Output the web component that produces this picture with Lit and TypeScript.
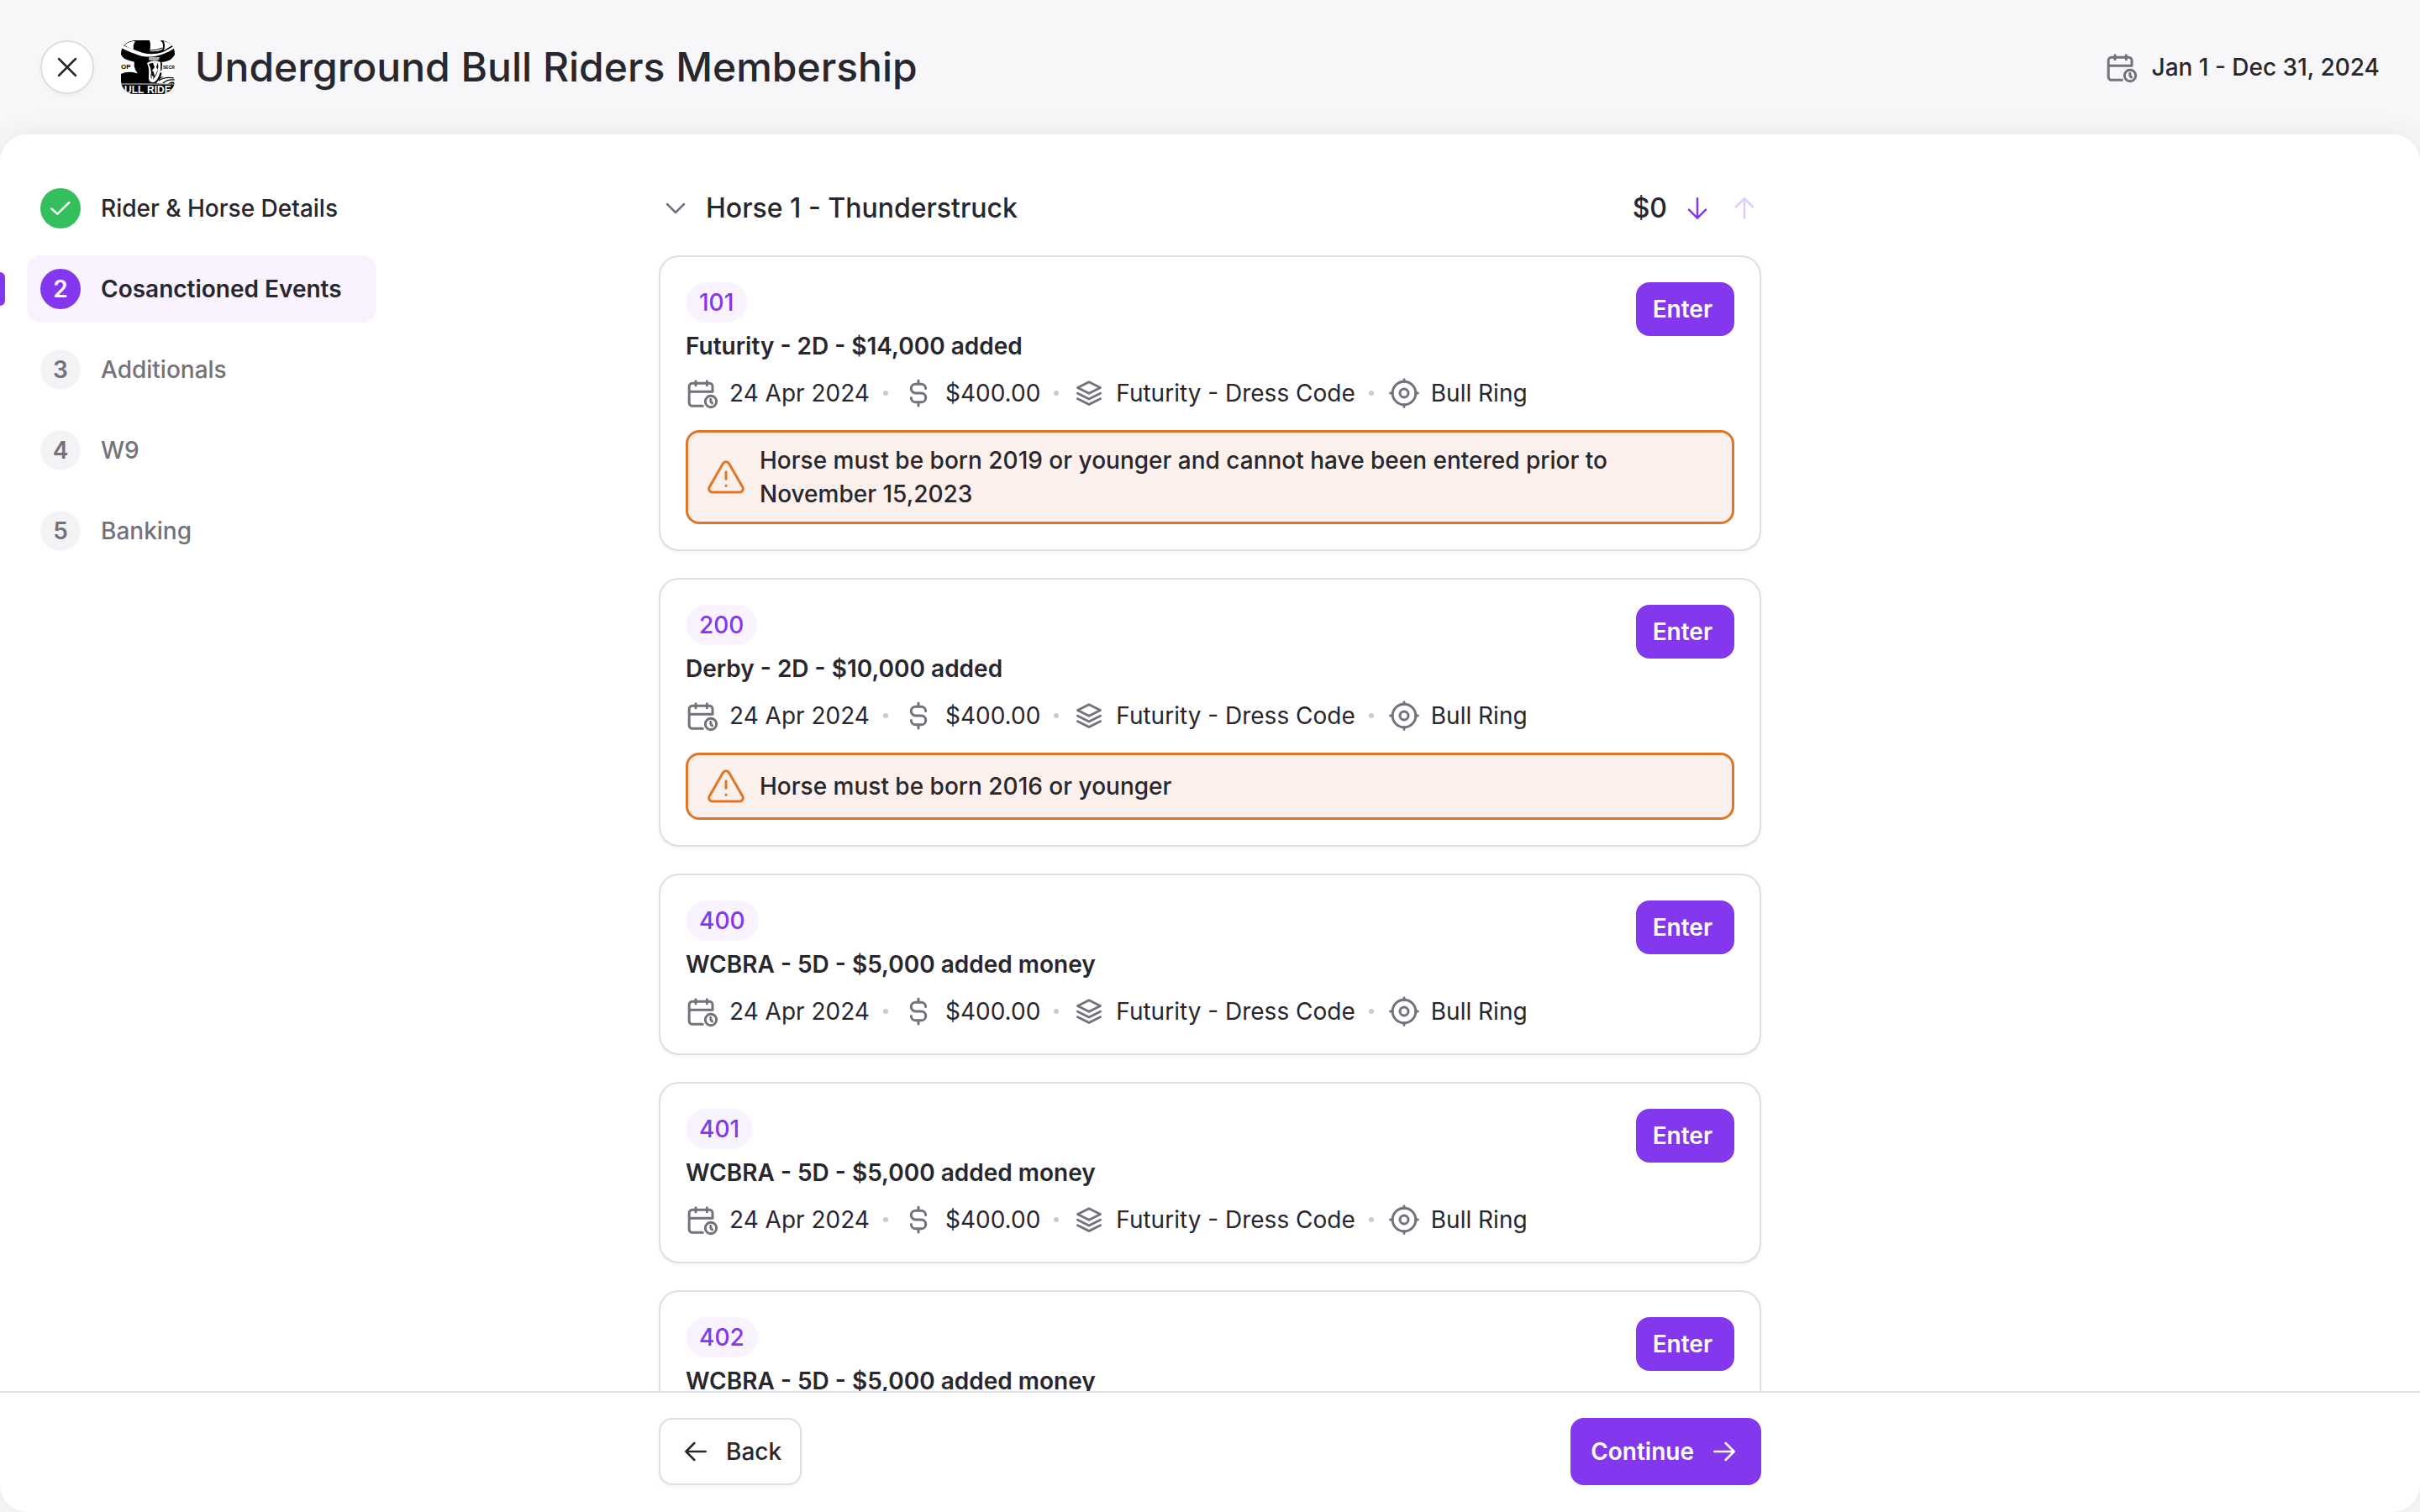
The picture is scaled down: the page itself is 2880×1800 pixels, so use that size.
import { LitElement, html, css, svg, nothing } from "lit";
import type { TemplateResult, SVGTemplateResult } from "lit";
import { customElement, property } from "lit/decorators.js";
import { classMap } from "lit/directives/class-map.js";

interface Step {
  label: string;
  state: "done" | "current" | "todo";
}

interface EventEntry {
  code: string;
  title: string;
  date: string;
  fee: string;
  category: string;
  venue: string;
  warning?: string;
}

const STEPS: Step[] = [
  { label: "Rider & Horse Details", state: "done" },
  { label: "Cosanctioned Events", state: "current" },
  { label: "Additionals", state: "todo" },
  { label: "W9", state: "todo" },
  { label: "Banking", state: "todo" },
];

const common = {
  date: "24 Apr 2024",
  fee: "$400.00",
  category: "Futurity - Dress Code",
  venue: "Bull Ring",
};

const EVENTS: EventEntry[] = [
  {
    ...common,
    code: "101",
    title: "Futurity - 2D - $14,000 added",
    warning:
      "Horse must be born 2019 or younger and cannot have been entered prior to November 15,2023",
  },
  {
    ...common,
    code: "200",
    title: "Derby - 2D - $10,000 added",
    warning: "Horse must be born 2016 or younger",
  },
  { ...common, code: "400", title: "WCBRA - 5D - $5,000 added money" },
  { ...common, code: "401", title: "WCBRA - 5D - $5,000 added money" },
  { ...common, code: "402", title: "WCBRA - 5D - $5,000 added money" },
];

const ICONS: Record<string, SVGTemplateResult> = {
  close: svg`<path d="M6 6l12 12M18 6 6 18"/>`,
  check: svg`<path d="M5.6 12.3 9.8 16 18.2 7.8"/>`,
  chevron: svg`<path d="M6 9l6 6 6-6"/>`,
  left: svg`<path d="M19 12H5m6-6-6 6 6 6"/>`,
  right: svg`<path d="M5 12h14m-6-6 6 6-6 6"/>`,
  down: svg`<path d="M12 5v14m6-6-6 6-6-6"/>`,
  up: svg`<path d="M12 19V5M6 11l6-6 6 6"/>`,
  calendar: svg`<g stroke-width="1.8"><path d="M7.2 3.4v3M15.2 3.4v3M2.5 11h16.7M12.2 21.2H4.7a2.2 2.2 0 0 1-2.2-2.2V7.1A2.2 2.2 0 0 1 4.7 4.9H17a2.2 2.2 0 0 1 2.2 2.2V11"/><circle cx="18" cy="18" r="4"/><path d="M17.9 16.4v1.7l1 1"/></g>`,
  dollar: svg`<path stroke-width="1.8" d="M12 3v2.5M12 18.5V21M17.2 8.75A3.25 3.25 0 0 0 14 5.5h-4a3.25 3.25 0 0 0 0 6.5h4a3.25 3.25 0 0 1 0 6.5h-4a3.25 3.25 0 0 1-3.2-3.25"/>`,
  layers: svg`<g stroke-width="1.7"><path d="M12 4 3.9 8.1l8.1 4.1 8.1-4.1z"/><path d="M3.9 12.1 12 16.2l8.1-4.1M3.9 16.1 12 20.1l8.1-4"/></g>`,
  target: svg`<g stroke-width="1.8"><circle cx="12" cy="12" r="8.3"/><circle cx="12" cy="12" r="3"/><path d="M12 2.2v1.5M12 20.3v1.5M2.2 12h1.5M20.3 12h1.5"/></g>`,
  warning: svg`<path d="m21.9 18-8.2-14.2a2 2 0 0 0-3.4 0L2.1 18a2 2 0 0 0 1.7 3h16.4a2 2 0 0 0 1.7-3z"/><path d="M12 8.9v4.2M12 17v.1"/>`,
};

@customElement("ui-icon")
class UiIcon extends LitElement {
  @property() name = "";

  static styles = css`
    :host {
      display: block;
      flex: none;
      width: 40px;
      height: 40px;
    }
    .glyph {
      display: block;
      width: 100%;
      height: 100%;
      fill: none;
      stroke: currentColor;
      stroke-width: 1.5;
      stroke-linecap: round;
      stroke-linejoin: round;
    }
  `;

  render() {
    return html`<svg class="glyph" viewBox="0 0 24 24" aria-hidden="true">
      ${ICONS[this.name]}
    </svg>`;
  }
}

@customElement("club-logo")
class ClubLogo extends LitElement {
  static styles = css`
    :host {
      display: block;
      flex: none;
      width: 64px;
      height: 64px;
      border-radius: 16px;
      overflow: hidden;
    }
    .art {
      display: block;
      width: 100%;
      height: 100%;
    }
    .label {
      font-family: "Liberation Sans", Arial, sans-serif;
      font-weight: 700;
    }
  `;

  render() {
    return html`<svg class="art" viewBox="0 0 64 64" role="img" aria-label="Bull Riders">
      <rect width="64" height="64" fill="#fff" />
      <path d="M0 9C8 13 16 16 22 18c8 2.500 18 2 26-1 6-2 12-5 16-8v8c-3 6-8 8-15 9H17C9 24 3 23 0 17z" fill="#000" />
      <path d="M2 6Q8 1 16 0h34q8 2 13 7L50 14q-12 4-24 1Q12 10 2 6z" fill="#000" />
      <path d="M4 6q5-5 13-5-3 4-2 10Q9 9 4 6z" fill="#fff" />
      <path d="M34 0h13q5 5 2 11-6 3-15 2 2-7 0-13z" fill="#fff" />
      <path d="M51 1q6 1 10 5l-10 6q2-5 0-11z" fill="#fff" />
      <path d="M34 12q9 0 15-3" fill="none" stroke="#000" stroke-width="1" />
      <path d="M1 7.500Q12 15 26 17.500q22 3 37-10" fill="none" stroke="#fff" stroke-width="1.400" />
      <path d="M17 20h29l3 8-1 14-8 10H22q-3-5-2-12-7-9-3-20z" fill="#000" />
      <path d="M33 20h13l-1 3.500q-6 1-12 0z" fill="#aaa" />
      <path d="M0 40q6-3 14-2l8 2 12 12 12-8q8-3 18 7v2H0z" fill="#000" />
      <path d="M31 27q8-5 16-1 1 9-2 17-4 8-8 7-5-1-4-8 1-8-2-15z" fill="#fff" />
      <path d="M33 28q6-2 11-1 1 8-2 14-3 6-5 5-3-2-1-7 0-6-3-11z" fill="#000" />
      <path d="M38 27l6-1-2 6 2 3-4 8-1-5-2-2 3-4z" fill="#fff" />
      <path d="M36 41l3 3-2 3z" fill="#fff" />
      <path d="M46 39q8-3 18 3v-6q-9-2-17 0z" fill="#fff" />
      <path d="M42 51q6-10 17-9l5 2v5q-5 0-9 3z" fill="#fff" />
      <path d="M45 48q7-5 18-3M50 51q5-5 14-4" fill="none" stroke="#000" stroke-width="1.200" />
      <path d="M0 52h64" stroke="#ddd" stroke-width="1.200" />
      <rect y="53" width="64" height="11" fill="#000" />
      <text class="label" x="0" y="34" font-size="8">OP</text>
      <text class="label" x="50" y="34" font-size="5">SECR</text>
      <text class="label" x="4" y="63" font-size="12" fill="#fff">ULL</text>
      <text class="label" x="31" y="63" font-size="12" fill="#fff">RIDE</text>
    </svg>`;
  }
}

@customElement("event-card")
class EventCard extends LitElement {
  @property({ attribute: false }) entry!: EventEntry;

  static styles = css`
    :host {
      display: block;
    }
    .card {
      box-sizing: border-box;
      padding: 30px;
      border: 2px solid #dfdee4;
      border-radius: 24px;
      background: #fff;
      box-shadow: 0 2px 4px rgba(30, 25, 50, 0.05);
    }
    .top {
      display: flex;
      justify-content: space-between;
      align-items: flex-start;
      gap: 24px;
    }
    .code {
      display: inline-block;
      padding: 4px 16px;
      border-radius: 24px;
      background: #f8f3ff;
      color: #8438ed;
      font-weight: 500;
      vertical-align: top;
    }
    .title {
      margin: 8px 0 0;
      font-size: 28px;
      line-height: 40px;
      font-weight: 600;
    }
    .enter {
      flex: none;
      height: 64px;
      padding: 0 26px 0 20px;
      border: 0;
      border-radius: 16px;
      background: #8438ed;
      color: #fff;
      font: inherit;
      font-weight: 600;
      cursor: pointer;
    }
    .meta {
      display: flex;
      flex-wrap: wrap;
      align-items: center;
      gap: 16px;
      margin: 0;
      padding: 0;
      list-style: none;
    }
    .fact {
      display: flex;
      align-items: center;
      gap: 12px;
    }
    .fact ui-icon {
      color: #73717b;
    }
    .dot {
      width: 6px;
      height: 6px;
      border-radius: 50%;
      background: #cbc9d2;
    }
    .body {
      display: flex;
      flex-direction: column;
      gap: 24px;
    }
    .info {
      display: flex;
      flex-direction: column;
      gap: 16px;
    }
    .warning {
      display: flex;
      align-items: center;
      gap: 16px;
      padding: 13px 21px;
      border: 3px solid #e07524;
      border-radius: 16px;
      background: #fbf0eb;
      font-weight: 500;
    }
    .warning ui-icon {
      width: 48px;
      height: 48px;
      color: #e07524;
    }
    .warning p {
      margin: 0;
    }
  `;

  private fact(icon: string, text: string): TemplateResult {
    return html`<li class="fact"><ui-icon name=${icon}></ui-icon><span>${text}</span></li>`;
  }

  render() {
    const e = this.entry;
    const dot = html`<li class="dot" aria-hidden="true"></li>`;
    return html`<article class="card">
      <div class="body">
        <div class="info">
          <div class="top">
            <div>
              <span class="code">${e.code}</span>
              <h3 class="title">${e.title}</h3>
            </div>
            <button class="enter" type="button">Enter</button>
          </div>
          <ul class="meta">
            ${this.fact("calendar", e.date)} ${dot} ${this.fact("dollar", e.fee)} ${dot}
            ${this.fact("layers", e.category)} ${dot} ${this.fact("target", e.venue)}
          </ul>
        </div>
        ${e.warning
          ? html`<div class="warning" role="note">
              <ui-icon name="warning"></ui-icon>
              <p>${e.warning}</p>
            </div>`
          : nothing}
      </div>
    </article>`;
  }
}

@customElement("step-nav")
class StepNav extends LitElement {
  @property({ attribute: false }) steps: Step[] = [];

  static styles = css`
    :host {
      display: block;
    }
    .steps {
      display: flex;
      flex-direction: column;
      gap: 16px;
      margin: 0;
      padding: 0;
      list-style: none;
    }
    .step {
      position: relative;
      display: flex;
      align-items: center;
      gap: 24px;
      padding: 16px;
      border-radius: 16px;
      color: #73717b;
      font-weight: 500;
      text-decoration: none;
    }
    .badge {
      display: flex;
      flex: none;
      align-items: center;
      justify-content: center;
      width: 48px;
      height: 48px;
      border-radius: 50%;
      background: #f3f3f5;
      font-weight: 600;
    }
    .done {
      color: #28262e;
    }
    .done .badge {
      background: #34bf5d;
      color: #fff;
    }
    .current {
      background: #f8f3ff;
      color: #28262e;
      font-weight: 600;
    }
    .current .badge {
      background: #8438ed;
      color: #fff;
    }
    .current::before {
      content: "";
      position: absolute;
      left: -32px;
      top: 20px;
      bottom: 20px;
      width: 6px;
      border-radius: 0 6px 6px 0;
      background: #8438ed;
    }
  `;

  render() {
    return html`<nav aria-label="Steps">
      <ol class="steps">
        ${this.steps.map(
          (s, i) => html`<li>
            <a
              class=${classMap({ step: true, [s.state]: true })}
              href="#step-${i + 1}"
              aria-current=${s.state === "current" ? "step" : "false"}
            >
              <span class="badge"
                >${s.state === "done" ? html`<ui-icon name="check"></ui-icon>` : i + 1}</span
              >
              <span>${s.label}</span>
            </a>
          </li>`
        )}
      </ol>
    </nav>`;
  }
}

@customElement("app-root")
class AppRoot extends LitElement {
  static styles = css`
    :host {
      display: flex;
      flex-direction: column;
      height: 100vh;
      overflow: hidden;
      background: #f7f7f9;
      color: #28262e;
      font-family: Inter, "Liberation Sans", sans-serif;
      font-size: 28px;
      line-height: 40px;
    }
    .header {
      display: flex;
      align-items: center;
      padding: 48px;
    }
    .close {
      display: flex;
      flex: none;
      align-items: center;
      justify-content: center;
      box-sizing: border-box;
      width: 64px;
      height: 64px;
      margin-right: 32px;
      padding: 0;
      border: 2px solid #dfdee4;
      border-radius: 50%;
      background: #fff;
      color: inherit;
      box-shadow: 0 2px 4px rgba(30, 25, 50, 0.05);
      cursor: pointer;
    }
    .name {
      margin: 0 auto 0 24px;
      font-size: 48px;
      line-height: 64px;
      font-weight: 500;
    }
    .period {
      display: flex;
      align-items: center;
      gap: 16px;
      font-weight: 500;
    }
    .period ui-icon {
      color: #73717b;
    }
    .panel {
      display: flex;
      flex: 1;
      flex-direction: column;
      min-height: 0;
      border-radius: 32px;
      background: #fff;
      box-shadow: 0 0 32px rgba(30, 25, 50, 0.07);
    }
    .columns {
      display: grid;
      grid-template-columns: 1fr minmax(0, 1312px) 1fr;
    }
    .content {
      flex: 1;
      min-height: 0;
      overflow-y: auto;
      scrollbar-width: none;
    }
    .nav {
      max-width: 416px;
      padding: 48px 32px;
    }
    .list {
      display: flex;
      flex-direction: column;
      gap: 32px;
      padding: 68px 0 32px;
    }
    .group {
      display: flex;
      align-items: center;
      gap: 16px;
      margin-bottom: 4px;
      font-size: 32px;
      line-height: 40px;
      font-weight: 500;
    }
    .group-name {
      margin: 0 auto 0 0;
      font: inherit;
    }
    .tool {
      flex: none;
      padding: 0;
      border: 0;
      background: none;
      color: #8438ed;
      cursor: pointer;
    }
    .tool:disabled {
      opacity: 0.25;
    }
    .toggle {
      color: #73717b;
    }
    .footer {
      padding: 30px 0 32px;
      border-top: 2px solid #dfdee4;
    }
    .actions {
      display: flex;
      grid-column: 2;
      justify-content: space-between;
    }
    .action {
      display: flex;
      align-items: center;
      gap: 16px;
      height: 80px;
      padding: 0 22px;
      border: 2px solid #dfdee4;
      border-radius: 16px;
      background: #fff;
      color: inherit;
      font: inherit;
      font-weight: 500;
      box-shadow: 0 2px 4px rgba(30, 25, 50, 0.05);
      cursor: pointer;
    }
    .primary {
      border-color: #8438ed;
      background: #8438ed;
      color: #fff;
      font-weight: 600;
    }
  `;

  render() {
    return html`
      <header class="header">
        <button class="close" type="button" aria-label="Close"><ui-icon name="close"></ui-icon></button>
        <club-logo></club-logo>
        <h1 class="name">Underground Bull Riders Membership</h1>
        <div class="period"><ui-icon name="calendar"></ui-icon><span>Jan 1 - Dec 31, 2024</span></div>
      </header>
      <div class="panel">
        <div class="content columns">
          <step-nav class="nav" .steps=${STEPS}></step-nav>
          <main class="list">
            <div class="group">
              <button class="tool toggle" type="button" aria-label="Collapse" aria-expanded="true">
                <ui-icon name="chevron"></ui-icon>
              </button>
              <h2 class="group-name">Horse 1 - Thunderstruck</h2>
              <span>$0</span>
              <button class="tool" type="button" aria-label="Next horse"><ui-icon name="down"></ui-icon></button>
              <button class="tool" type="button" aria-label="Previous horse" disabled>
                <ui-icon name="up"></ui-icon>
              </button>
            </div>
            ${EVENTS.map((e) => html`<event-card .entry=${e}></event-card>`)}
          </main>
        </div>
        <footer class="footer columns">
          <div class="actions">
            <button class="action" type="button"><ui-icon name="left"></ui-icon>Back</button>
            <button class="action primary" type="button">Continue<ui-icon name="right"></ui-icon></button>
          </div>
        </footer>
      </div>
    `;
  }
}
